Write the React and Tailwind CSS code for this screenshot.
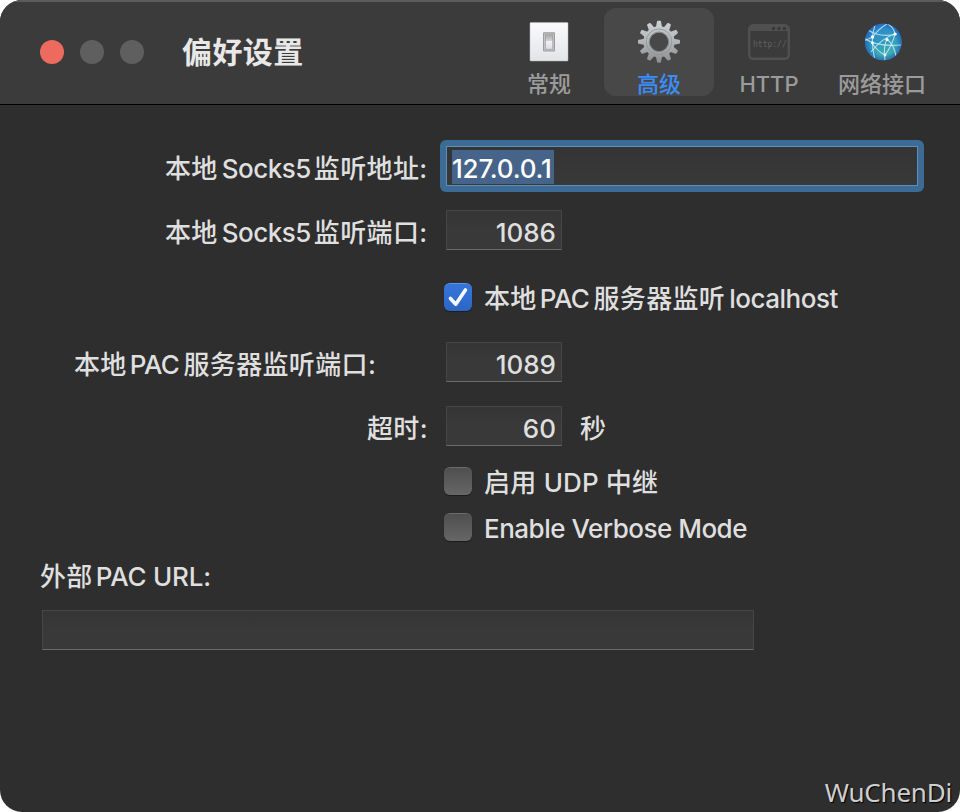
import React from "react";

function Zh({ children, className = "" }) {
  return (
    <span className={`font-['Noto_Sans_CJK_SC',sans-serif] tracking-[0.35px] ${className}`}>{children}</span>
  );
}

function En({ children, className = "", tracking = "tracking-[-0.5px]" }) {
  return <span className={`whitespace-pre ${tracking} ${className}`}>{children}</span>;
}

function Label({ children, className = "" }) {
  return <div className={`flex h-8 items-baseline leading-8 whitespace-nowrap ${className}`}>{children}</div>;
}

function Field({ children, className = "" }) {
  return (
    <div
      className={`flex h-10 items-center justify-end border border-[#464646] border-b-[#6a6a6a] bg-linear-to-b from-[#353535] via-[#393939] to-[#393939] pr-[5px] pt-[5px] leading-8 ${className}`}
    >
      {children}
    </div>
  );
}

function Checkbox({ checked }) {
  return checked ? (
    <div className="flex size-7 shrink-0 items-center justify-center rounded-[6px] border-t border-[#5b93e8] bg-linear-to-b from-[#3576dc] to-[#2c66c4] shadow-[0_1px_1px_rgba(0,0,0,0.4)]">
      <svg viewBox="0 0 28 28" className="-mt-px size-7 shrink-0" fill="none" stroke="#f4f8ff" strokeWidth="3.6" strokeLinecap="round" strokeLinejoin="round">
        <path d="M6.4 15.4 L11.8 21.2 L21.4 7" />
      </svg>
    </div>
  ) : (
    <div className="size-7 shrink-0 rounded-[6px] border-t border-[#6b6b6b] bg-linear-to-b from-[#4f4f4f] to-[#666] shadow-[0_1px_1px_rgba(0,0,0,0.4)]" />
  );
}

function SwitchIcon() {
  return (
    <svg viewBox="0 0 44 44" className="size-11 shrink-0">
      <defs>
        <linearGradient id="plate" x1="0" y1="0" x2="0" y2="1">
          <stop offset="0" stopColor="#fbfbfc" />
          <stop offset="1" stopColor="#e2e4e8" />
        </linearGradient>
        <linearGradient id="rocker" x1="0" y1="0" x2="0" y2="1">
          <stop offset="0" stopColor="#a9a9ac" />
          <stop offset="0.4" stopColor="#d2d2d6" />
          <stop offset="0.45" stopColor="#f2f2f6" />
          <stop offset="1" stopColor="#dcdce2" />
        </linearGradient>
      </defs>
      <rect x="3" y="2.6" width="38" height="38.4" rx="0.8" fill="url(#plate)" stroke="#b9babd" strokeWidth="0.5" />
      <rect x="16" y="12.2" width="12" height="19.4" rx="1" fill="#9d9d9f" />
      <rect x="17.2" y="13.6" width="9.6" height="16.8" fill="#d0d0d2" />
      <rect x="18.4" y="14.8" width="7.4" height="14.4" fill="url(#rocker)" stroke="#929295" strokeWidth="0.6" />
    </svg>
  );
}

const GEAR_TEETH = Array.from({ length: 12 }, (_, i) => i * 30);

function GearIcon() {
  return (
    <svg viewBox="0 0 44 44" className="size-11 shrink-0">
      <defs>
        <linearGradient id="metal" gradientUnits="userSpaceOnUse" x1="0" y1="1" x2="0" y2="43">
          <stop offset="0" stopColor="#ccd2d4" />
          <stop offset="0.5" stopColor="#b2b5b6" />
          <stop offset="1" stopColor="#8b8c8d" />
        </linearGradient>
        <mask id="gear">
          {GEAR_TEETH.map((a) => (
            <path key={a} d="M18.6 9 L20 1.6 Q20.1 0.8 20.8 0.8 H23.2 Q23.9 0.8 24 1.6 L25.4 9 Z" fill="#fff" transform={`rotate(${a} 22 21.8)`} />
          ))}
          <circle cx="22" cy="21.8" r="15.6" fill="#fff" />
          <circle cx="22" cy="21.8" r="9.4" fill="#000" />
        </mask>
      </defs>
      <rect width="44" height="44" fill="url(#metal)" mask="url(#gear)" />
      <circle cx="22" cy="21.8" r="12.8" fill="none" stroke="#909394" strokeWidth="0.8" />
      <circle cx="22" cy="21.8" r="9.8" fill="none" stroke="#7d8081" strokeWidth="0.9" />
    </svg>
  );
}

function HttpIcon() {
  return (
    <svg viewBox="0 0 44 44" className="size-11 shrink-0">
      <rect x="2.2" y="5.2" width="39.6" height="33.6" rx="4" fill="none" stroke="#505050" strokeWidth="2.4" />
      <path d="M2 11 V8 Q2 5 5 5 H39 Q42 5 42 8 V11 Z" fill="#505050" />
      <path d="M25 7.2h3v2.6h-3zM30.5 7.2h3v2.6h-3zM36 7.2h3v2.6h-3z" fill="#343434" />
      <text x="6" y="27" fontFamily="'DejaVu Sans Mono', monospace" fontSize="8" fontWeight="400" fill="#606060">http://</text>
    </svg>
  );
}

function GlobeIcon() {
  return (
    <svg viewBox="0 0 44 44" className="size-11 shrink-0">
      <defs>
        <linearGradient id="sea" x1="0" y1="0" x2="0.3" y2="1">
          <stop offset="0" stopColor="#3385d3" />
          <stop offset="0.5" stopColor="#2e95bf" />
          <stop offset="1" stopColor="#45b3ac" />
        </linearGradient>
        <radialGradient id="rim">
          <stop offset="0.7" stopColor="#1c5fb4" stopOpacity="0" />
          <stop offset="1" stopColor="#1f66c2" stopOpacity="0.85" />
        </radialGradient>
        <clipPath id="ball"><circle cx="23.3" cy="22" r="18.3" /></clipPath>
      </defs>
      <circle cx="23.3" cy="22" r="18.3" fill="url(#sea)" />
      <circle cx="23.3" cy="22" r="18.3" fill="url(#rim)" />
      <g clipPath="url(#ball)" fill="none" stroke="#c9eef8" strokeWidth="1.1" strokeOpacity="0.8">
        <path d="M8 10 Q20 18 37 14" />
        <path d="M15 5 Q10 20 14.5 38" />
        <path d="M13 17 Q18 9 27 4" />
        <path d="M4 21 Q8 19 13 17" />
        <path d="M4 18 Q16 27 41 25" />
        <path d="M35 14 Q22 18 11 32" />
        <path d="M12 23 Q17 31 25 35" />
        <path d="M27 19 Q23 27 25 40" />
        <path d="M27 19 Q34 25 36 36" />
        <path d="M28 4 Q34 8 35 14 Q32 26 25 35" />
      </g>
      <g fill="#fff">
        <circle cx="12.5" cy="17" r="1.7" />
        <circle cx="12.5" cy="23" r="1.4" />
        <circle cx="35" cy="14" r="1.6" />
        <circle cx="27" cy="19.5" r="1.5" />
        <circle cx="25" cy="35" r="1.4" />
      </g>
    </svg>
  );
}

function Tab({ icon, children, active, className = "" }) {
  return (
    <div className={`flex h-22 flex-col items-center rounded-[12px] pt-3 ${active ? "bg-[#484848] text-[#3b8cf8]" : "text-[#9b9b9b]"} ${className}`}>
      {icon}
      <span className="mt-1 h-8 font-[Inter,'Noto_Sans_CJK_SC',sans-serif] text-[22px] font-medium leading-8 whitespace-nowrap">{children}</span>
    </div>
  );
}

export default function App() {
  return (
    <div className="h-[812px] w-[960px] bg-white">
      <div className="relative flex h-full flex-col overflow-hidden rounded-[22px] bg-[#2e2e2e] font-[Inter,'Noto_Sans_CJK_SC',sans-serif] text-[26px] font-medium text-[#dfdfdf]">
        <header className="flex h-[105px] shrink-0 border-t-2 border-b border-t-[#5c5c5c] border-b-black bg-[#3b3b3b]">
          <div className="ml-10 mt-[38px] flex h-6 gap-4">
            <i className="size-6 rounded-full bg-[#ed6a5e]" />
            <i className="size-6 rounded-full bg-[#5f5f5f]" />
            <i className="size-6 rounded-full bg-[#5f5f5f]" />
          </div>
          <h1 className="ml-[38px] mt-7 h-10 w-[344px] font-['Noto_Sans_CJK_SC',sans-serif] text-[30px] font-bold leading-10 tracking-[0.4px] text-[#e8e8e8]">偏好设置</h1>
          <nav className="mt-1.5 flex">
            <Tab className="-ml-[32px] w-[110px]" icon={<SwitchIcon />}>常规</Tab>
            <Tab className="w-[110px]" active icon={<GearIcon />}>高级</Tab>
            <Tab className="w-[110px]" icon={<HttpIcon />}>HTTP</Tab>
            <Tab className="w-[116px]" icon={<GlobeIcon />}>网络接口</Tab>
          </nav>
        </header>

        <main className="flex flex-col pt-[35px]">
          <div className="flex h-[52px]">
            <Label className="mt-[11px] ml-[165px] w-[275px]">
              <Zh>本地</Zh><En className="ml-1">Socks5</En><Zh className="ml-[3px]">监听地址</Zh><En>:</En>
            </Label>
            <div className="h-[52px] w-[484px] rounded-[6px] bg-[#3c6c96] p-[6px]">
              <div className="h-10 border border-[#5b90ba] bg-linear-to-b from-[#343434] to-[#393939] pl-[5px] pt-[3px]">
                <span className="block h-[34px] w-[102px] bg-[#466389] leading-[37px] tracking-[-0.2px] text-white">127.0.0.1</span>
              </div>
            </div>
          </div>

          <div className="mt-[18px] flex h-10">
            <Label className="mt-[5px] ml-[165px] w-[281px]">
              <Zh>本地</Zh><En className="ml-1">Socks5</En><Zh className="ml-[3px]">监听端口</Zh><En>:</En>
            </Label>
            <Field className="w-[116px]">1086</Field>
          </div>

          <div className="mt-[33px] ml-[444px] flex h-7">
            <Checkbox checked />
            <Label className="-mt-0.5 ml-3">
              <Zh>本地</Zh><En className="ml-[3px]">PAC</En><Zh className="ml-1">服务器监听</Zh><En className="ml-1">localhost</En>
            </Label>
          </div>

          <div className="mt-[31px] flex h-10">
            <Label className="mt-[5px] ml-[74px] w-[372px]">
              <Zh>本地</Zh><En className="ml-[3px]">PAC</En><Zh className="ml-1">服务器监听端口</Zh><En>:</En>
            </Label>
            <Field className="w-[116px]">1089</Field>
          </div>

          <div className="mt-6 flex h-10">
            <Label className="mt-[5px] ml-[367px] w-[79px]">
              <Zh>超时</Zh><En>:</En>
            </Label>
            <Field className="w-[116px]">60</Field>
            <Label className="mt-[5px] ml-[18px]"><Zh>秒</Zh></Label>
          </div>

          <div className="mt-[21px] ml-[444px] flex h-7">
            <Checkbox />
            <Label className="-mt-0.5 ml-3">
              <Zh>启用</Zh><En tracking="tracking-[0.1px]"> UDP </En><Zh>中继</Zh>
            </Label>
          </div>

          <div className="mt-[18px] ml-[444px] flex h-7">
            <Checkbox />
            <Label className="ml-3"><En>Enable Verbose Mode</En></Label>
          </div>

          <Label className="mt-[18px] ml-10">
            <Zh>外部</Zh><En className="ml-[3px]" tracking="tracking-[-0.2px]">PAC URL:</En>
          </Label>
          <Field className="mt-[19px] ml-[42px] w-[712px]" />
        </main>

        <span className="absolute right-[8px] bottom-[2px] font-['Noto_Sans',sans-serif] text-[26px] font-normal leading-9 tracking-[-0.2px] text-[#cfcfcf] [text-shadow:1px_1px_1px_#000]">WuChenDi</span>
      </div>
    </div>
  );
}
